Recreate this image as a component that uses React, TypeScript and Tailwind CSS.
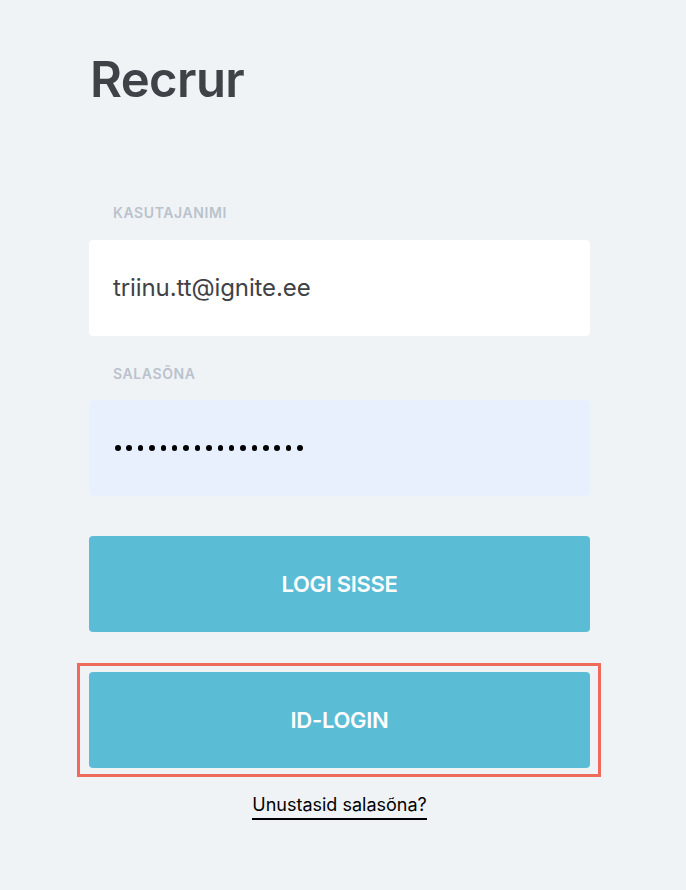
export default function App() {
  return (
    <div className="min-h-screen bg-[#f0f3f6] font-['Inter',sans-serif]">
      <div className="w-[501px] ml-[89px] pt-[55px]">
        {/* Logo */}
        <h1 className="text-[49px] leading-none font-semibold text-[#3f4247] tracking-[-0.6px] ml-[1px]">
          Recrur
        </h1>

        {/* Username */}
        <label className="block mt-[101px] ml-[24px] text-[14px] leading-4 font-semibold tracking-[0.6px] text-[#bac2cc] uppercase">
          Kasutajanimi
        </label>
        <div className="mt-[19px] h-[96px] rounded bg-white flex items-center px-[24px]">
          <span className="text-[24px] text-[#3f4247] tracking-[-0.1px]">triinu.tt@ignite.ee</span>
        </div>

        {/* Password */}
        <label className="block mt-[30px] ml-[24px] text-[14px] leading-4 font-semibold tracking-[0.6px] text-[#bac2cc] uppercase">
          Salasõna
        </label>
        <div className="mt-[18px] h-[96px] rounded bg-[#e8f0fe] flex items-center px-[24px]">
          <span className="flex gap-[5.9px] pl-[2px]">
            {Array.from({ length: 17 }).map((_, i) => (
              <span key={i} className="w-[5.5px] h-[5.5px] rounded-full bg-black" />
            ))}
          </span>
        </div>

        {/* Buttons */}
        <button className="mt-[40px] w-full h-[96px] rounded bg-[#5bbcd6] text-white text-[22px] font-semibold tracking-[-0.3px]">
          LOGI SISSE
        </button>

        <div className="mt-[31px] -ml-[12px] -mr-[11px] border-[3px] border-[#ee6b5b] pt-[6px] pb-[6px] pl-[9px] pr-[8px]">
          <button className="w-full h-[96px] rounded bg-[#5bbcd6] text-white text-[22px] font-semibold tracking-[-0.3px]">
            ID-LOGIN
          </button>
        </div>

        <div className="mt-[16px] flex justify-center">
          <a className="text-[18px] leading-[24px] text-black border-b-2 border-black pb-[1px]">
            Unustasid salasõna?
          </a>
        </div>
      </div>
    </div>
  );
}
